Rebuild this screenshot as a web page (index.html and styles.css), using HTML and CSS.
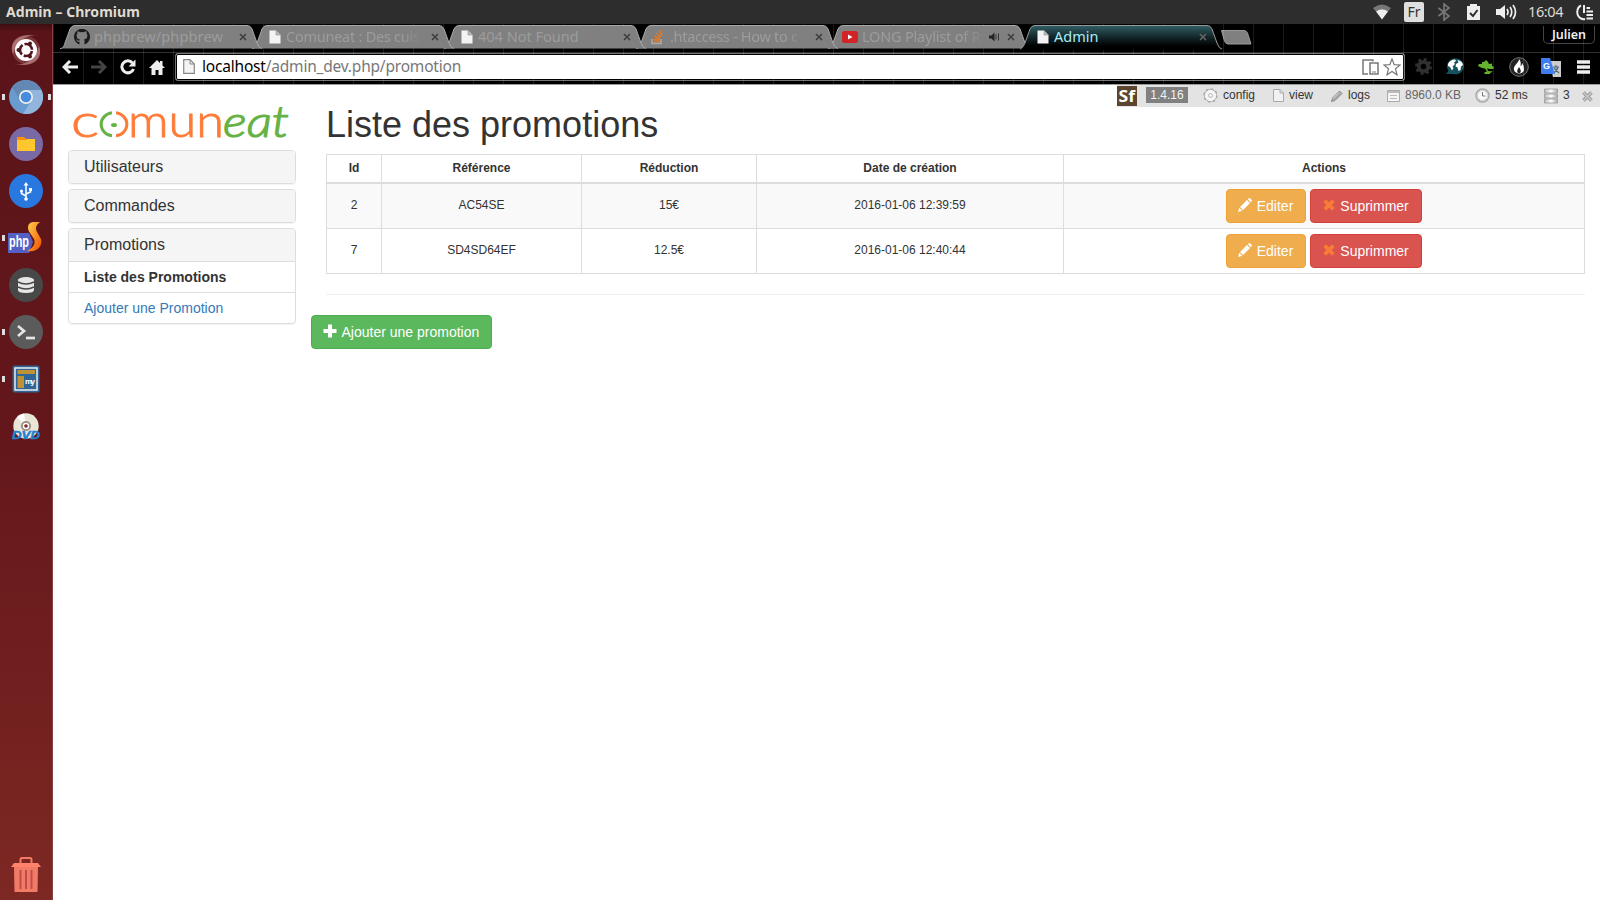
FILE: index.html
```html
<!DOCTYPE html>
<html lang="fr">
<head>
<meta charset="utf-8">
<title>Admin</title>
<link rel="stylesheet" href="styles.css">
</head>
<body>
<svg class="defs" width="0" height="0">
  <defs>
    <linearGradient id="activeTab" x1="0" y1="0" x2="0" y2="1"><stop offset="0" stop-color="#2f5f66"/><stop offset=".45" stop-color="#16292c"/><stop offset=".85" stop-color="#000"/></linearGradient>
    <linearGradient id="gDb" x1="0" y1="0" x2="1" y2="0"><stop offset="0" stop-color="#bbb"/><stop offset=".5" stop-color="#fff"/><stop offset="1" stop-color="#aaa"/></linearGradient>
    <linearGradient id="gFlame" x1="0" y1="0" x2="1" y2="1"><stop offset="0" stop-color="#ffd34d"/><stop offset="1" stop-color="#f04e00"/></linearGradient>
    <symbol id="tab" viewBox="0 0 203 26"><path d="M0 24.500C3 24.500 3.500 23 5 19L10 5Q11.500 1.500 15 1.500H187Q190.500 1.500 192 5L197 19Q199 24.500 202 24.500Z" fill="#808080"/><path d="M0 24.500C3 24.500 3.500 23 5 19L10 5Q11.500 1.500 15 1.500H187Q190.500 1.500 192 5L197 19Q199 24.500 202 24.500" fill="none" stroke="#a8a8a8"/></symbol>
    <symbol id="page" viewBox="0 0 12 14"><path d="M.5.5H7L11.500 5V13.500H.5Z" fill="#f3f3f3"/><path d="M7 .5V5H11.500" fill="#bbb" stroke="#999" stroke-width=".7"/></symbol>
    <symbol id="close" viewBox="0 0 8 8"><path d="M1 1L7 7M7 1L1 7" stroke="currentColor" stroke-width="1.500"/></symbol>
    <symbol id="youtube" viewBox="0 0 16 12"><rect width="16" height="12" rx="2.500" fill="#d22326"/><path d="M6 3.500L10.500 6L6 8.500Z" fill="#fff"/></symbol>
    <symbol id="pencil" viewBox="0 0 14 14"><path d="M0 14L1.300 9.800L4.200 12.700ZM2 9L9 2L12 5L5 12ZM9.800 1.300L11 .2Q11.500-.2 12 .2L13.800 2Q14.200 2.500 13.800 3L12.700 4.200Z" fill="#fff"/></symbol>
    <symbol id="remove" viewBox="0 0 12 12"><path d="M.3 3L3 .3L6 3.300L9 .3L11.700 3L8.700 6L11.700 9L9 11.700L6 8.700L3 11.700L.3 9L3.300 6Z" fill="#f87b36"/></symbol>
  </defs>
</svg>
<div class="desktop">
  <header class="panelbar">
    <b class="window-title">Admin – Chromium</b>
    <div class="tray">
      <svg width="20" height="16" viewBox="0 0 20 16"><path d="M1 4Q10-3 19 4L16 7.500Q10 3 4 7.500Z" fill="#777"/><path d="M4 7.500Q10 3 16 7.500L10 15.500Z" fill="#eee"/></svg>
      <span class="kbd">Fr</span>
      <svg width="14" height="18" viewBox="0 0 14 18"><path d="M1.500 5L12 13L7 17V1L12 5L1.500 13" fill="none" stroke="#777" stroke-width="1.700"/></svg>
      <svg width="13" height="16" viewBox="0 0 13 16"><path d="M0 2H3V0H10V2H13V16H0Z" fill="#eee"/><path d="M3 9L6 12L10.500 6" fill="none" stroke="#2d2d2d" stroke-width="2"/></svg>
      <svg width="21" height="16" viewBox="0 0 21 16"><path d="M0 5H4L9 1V15L4 11H0Z" fill="#eee"/><path d="M11 5Q13 8 11 11M14 3Q17.500 8 14 13M17 1Q22 8 17 15" fill="none" stroke="#eee" stroke-width="1.700"/></svg>
      <span class="clock">16:04</span>
      <svg width="18" height="17" viewBox="0 0 18 17"><path d="M5 1.500C0 4 0 12 5 14.500Q7 15.500 9 15" fill="none" stroke="#eee" stroke-width="2"/><path d="M8 1V9M10.500 4H14M10.500 7.500H17M10.500 11H17M10.500 14.500H17" stroke="#eee" stroke-width="2"/></svg>
    </div>
  </header>
  <div class="workspace">
    <nav class="launcher">
      <div class="app"><svg width="36" height="36" viewBox="0 0 36 36"><circle cx="18" cy="18" r="14" fill="#954e52" opacity=".55"/><path d="M5 22C0 8 12 0 31 4C20 2 10 7 5 22ZM31 14C36 28 24 36 5 32C16 34 27 29 31 14Z" fill="#c99" opacity=".6"/><circle cx="18" cy="18" r="11" fill="#fff"/><circle cx="18" cy="18" r="6" fill="none" stroke="#4f171b" stroke-width="2.600" stroke-dasharray="10.500 2" stroke-dashoffset="-1"/><circle cx="10.500" cy="18" r="2" fill="#4f171b"/><circle cx="22" cy="11.500" r="2" fill="#4f171b"/><circle cx="22" cy="24.500" r="2" fill="#4f171b"/></svg></div>
      <div class="app running focused"><svg width="34" height="34" viewBox="0 0 34 34"><circle cx="17" cy="17" r="17" fill="#699bcf"/><path d="M3 7A17 17 0 0 1 32 10H17L11 20Z" fill="#6488b4"/><path d="M17 10H32.500A17 17 0 0 1 14 33.700L23 20Z" fill="#91b5dc"/><circle cx="17" cy="17" r="7" fill="#eee"/><circle cx="17" cy="17" r="5.300" fill="#468bdd"/></svg></div>
      <div class="app"><svg width="34" height="34" viewBox="0 0 34 34"><circle cx="17" cy="17" r="17" fill="#796aa5"/><path d="M8 10H15L17 12H26V23H8Z" fill="#ff9100"/><path d="M8 13H17L18 12H26V24H8Z" fill="#ffc72d"/></svg></div>
      <div class="app"><svg width="34" height="34" viewBox="0 0 34 34"><circle cx="17" cy="17" r="17" fill="#2878df"/><path d="M17 10V24M17 22L12.500 19.500V17M17 20L21.500 18V15" fill="none" stroke="#fff" stroke-width="1.500"/><path d="M17 8L19.500 11.500H14.500Z" fill="#fff"/><circle cx="17" cy="25" r="1.800" fill="#fff"/><circle cx="12.500" cy="17" r="1.500" fill="#fff"/><rect x="20" y="14" width="3" height="3" fill="#fff"/></svg></div>
      <div class="app running"><svg width="36" height="36" viewBox="0 0 36 36"><path d="M0 13H21L25 22L21 33H0Z" fill="#5560c5"/><path d="M32 2H25C19 3 19 9 22 13L26 19C28 24 25 28 19 31C29 33 35 26 33 19L29 12C27 8 28 5 32 2Z" fill="url(#gFlame)"/><text x="1" y="27" class="php-label" textLength="20" lengthAdjust="spacingAndGlyphs">php</text></svg></div>
      <div class="app"><svg width="34" height="34" viewBox="0 0 34 34"><circle cx="17" cy="17" r="17" fill="#484848"/><path d="M9 11.500V22Q9 25 17 25T25 22V11.500Z" fill="#e6e6e6"/><ellipse cx="17" cy="12" rx="8" ry="3" fill="#e6e6e6"/><path d="M9 14Q17 18 25 14M9 19Q17 23 25 19" fill="none" stroke="#484848" stroke-width="1.500"/></svg></div>
      <div class="app running"><svg width="34" height="34" viewBox="0 0 34 34"><circle cx="17" cy="17" r="17" fill="#5b5b5b"/><path d="M9 11L15 16L9 21" fill="none" stroke="#e5e5e5" stroke-width="2.700"/><path d="M17 23H26" stroke="#e5e5e5" stroke-width="2.700"/></svg></div>
      <div class="app running"><svg width="28" height="28" viewBox="0 0 28 28"><rect x=".5" y=".5" width="27" height="27" rx="2" fill="#2f6496"/><rect x="3" y="3" width="22" height="22" fill="#326597" stroke="#eee" stroke-width="1.500"/><path d="M5.500 5H23V9H5.500ZM5.500 11H12V23H5.500Z" fill="#bf9234"/><text x="13" y="19" class="my-label" textLength="10">my</text></svg></div>
      <div class="app"><svg width="28" height="28" viewBox="0 0 28 28"><circle cx="14" cy="14" r="12.700" fill="#e9e5d7"/><path d="M14 14L5 5A13 13 0 0 1 12 1.400Z" fill="#fff"/><circle cx="14" cy="14" r="5" fill="#998c80"/><circle cx="14" cy="14" r="3.200" fill="#fff"/><circle cx="14" cy="14" r="1.800" fill="#7b2929"/><text x="0" y="27" class="dvd-label" textLength="28" lengthAdjust="spacingAndGlyphs">DVD</text></svg></div>
      <div class="app trash"><svg width="30" height="36" viewBox="0 0 30 36"><path d="M3 10H27L26.500 35H3.500Z" fill="#f27b67"/><path d="M0 10L3 6H27L30 10Z" fill="#ff826b"/><path d="M9.500 6V2.500Q9.500 1 11 1H19Q20.500 1 20.500 2.500V6" fill="none" stroke="#f27b67" stroke-width="2"/><path d="M9.500 13V32M15 13V32M20.500 13V32" stroke="#bd4f49" stroke-width="2"/></svg></div>
    </nav>
    <section class="browser">
      <div class="chrome">
        <div class="tabs">
          <div class="tab"><svg class="shape"><use href="#tab"/></svg>
            <svg class="fav" width="16" height="16" viewBox="0 0 16 16"><path d="M5.500 15.400V12.700C3.500 13 3 12 2.500 11.200C2.200 10.700 1.700 10.600 2.300 10.500C3.500 10.400 3.500 12 5.500 11.600Q5.600 10.900 6 10.500C3.500 10.200 2.600 8.700 2.600 6.800Q2.600 5.400 3.500 4.500Q3.100 3.400 3.600 2.300Q4.800 2.300 6 3.200Q8 2.700 10 3.200Q11.200 2.300 12.400 2.300Q12.900 3.400 12.500 4.500Q13.400 5.400 13.400 6.800C13.400 8.700 12.500 10.200 10 10.500Q10.500 11 10.500 12V15.400A8 8 0 1 0 5.500 15.400Z" fill="#1b1b1b"/></svg>
            <span class="tab-title t1">phpbrew/phpbrew</span><svg class="x"><use href="#close"/></svg></div>
          <div class="tab"><svg class="shape"><use href="#tab"/></svg><svg class="fav doc"><use href="#page"/></svg><span class="tab-title fade t2">Comuneat : Des cuis</span><svg class="x"><use href="#close"/></svg></div>
          <div class="tab"><svg class="shape"><use href="#tab"/></svg><svg class="fav doc"><use href="#page"/></svg><span class="tab-title">404 Not Found</span><svg class="x"><use href="#close"/></svg></div>
          <div class="tab"><svg class="shape"><use href="#tab"/></svg>
            <svg class="fav" width="16" height="16" viewBox="0 0 16 16"><path d="M2 10V14.500H11V10" fill="none" stroke="#aaa" stroke-width="1.500"/><path d="M4 12.500H9.500M4 10L9.500 11M4.500 7L10 9.500M6.500 4L10.700 8M10 1.500L12 7" stroke="#e87922" stroke-width="1.500"/></svg>
            <span class="tab-title fade t4">.htaccess - How to c</span><svg class="x"><use href="#close"/></svg></div>
          <div class="tab"><svg class="shape"><use href="#tab"/></svg><svg class="fav" width="16" height="12"><use href="#youtube"/></svg><span class="tab-title fade t5">LONG Playlist of R</span>
            <svg class="sound" width="11" height="10" viewBox="0 0 11 10"><path d="M0 3.500H2.500L5.500 .5V9.500L2.500 6.500H0Z" fill="#222"/><path d="M7 2.500V7.500M9.500 1.500V8.500" stroke="#333"/></svg><svg class="x"><use href="#close"/></svg></div>
          <div class="tab active"><svg class="shape" viewBox="0 0 203 26"><path d="M-2 26C2 25 3 23 5 19L10 5Q11.500 1.500 15 1.500H187Q190.500 1.500 192 5L197 19Q199 24.500 202 25V26Z" fill="url(#activeTab)"/><path d="M-2 25.500C2 25 3 23 5 19L10 5Q11.500 1.500 15 1.500H187Q190.500 1.500 192 5L197 19Q199 25 202 25" fill="none" stroke="#999"/></svg><svg class="fav doc"><use href="#page"/></svg><span class="tab-title">Admin</span><svg class="x"><use href="#close"/></svg></div>
          <svg class="newtab" width="31" height="15" viewBox="0 0 31 15"><path d="M.5.500H23Q25.500.5 26.500 3L30 14H7Q4.500 14 3.500 11Z" fill="#808080" stroke="#999"/></svg>
          <span class="user">Julien</span>
        </div>
        <div class="toolbar">
          <div class="nav">
            <svg width="16" height="14" viewBox="0 0 16 14"><path d="M8 1L2 7L8 13M2 7H16" fill="none" stroke="#eee" stroke-width="3"/></svg>
            <svg width="16" height="14" viewBox="0 0 16 14"><path d="M8 1L14 7L8 13M14 7H0" fill="none" stroke="#444" stroke-width="3"/></svg>
            <svg width="16" height="16" viewBox="0 0 16 16"><path d="M12.500 4A6 6 0 1 0 13.500 10" fill="none" stroke="#eee" stroke-width="3"/><path d="M15.500 .5V7.500H8.500Z" fill="#eee"/></svg>
            <svg width="16" height="16" viewBox="0 0 16 16"><path d="M8 1L0 9H2.500V16H6.500V11H9.500V16H13.500V9H16L13.500 6.500V2H11V4Z" fill="#eee"/></svg>
          </div>
          <div class="omnibox">
            <svg width="12" height="15" viewBox="0 0 12 15"><path d="M.7.7H7L11.300 5V14.300H.7Z" fill="#f4f4f4" stroke="#888" stroke-width="1.200"/><path d="M7 .7V5H11.300" fill="none" stroke="#888"/></svg>
            <span class="url"><span class="host">localhost</span>/admin_dev.php/promotion</span>
            <svg class="device" width="17" height="16" viewBox="0 0 17 16"><path d="M6 15H1V1H11V2.500" fill="none" stroke="#777" stroke-width="1.500"/><rect x="8" y="4" width="8" height="11" fill="#fff" stroke="#777" stroke-width="1.500"/><path d="M10 13H14" stroke="#777"/></svg>
            <svg width="18" height="18" viewBox="0 0 18 18"><path d="M9 1L11.200 6.700L17.200 7L12.500 10.800L14 16.800L9 13.400L4 16.800L5.500 10.800L.8 7L6.800 6.700Z" fill="none" stroke="#777" stroke-width="1.200"/></svg>
          </div>
          <div class="extensions">
            <svg width="17" height="17" viewBox="-9 -9 18 18"><circle r="5" fill="none" stroke="#303030" stroke-width="4"/><circle r="7.500" fill="none" stroke="#303030" stroke-width="3" stroke-dasharray="3 2.890"/></svg>
            <svg width="18" height="18" viewBox="0 0 18 18"><path d="M0 16L2.500 13A8.500 8 0 1 1 7 16Z" fill="#15525f"/><path d="M2 6Q4 1.500 9 1.500L10 3L8 4.500L9 6L6.500 8.500L7.500 10L6 12.500L4 9L2 8ZM11.500 2Q16.500 3 17 7L15 8.500L14.500 12L12.500 13L11.500 9.500L9.500 8.500L10 6L12.500 4.500Z" fill="#fff"/></svg>
            <svg width="18" height="16" viewBox="0 0 18 16"><path d="M0 7L1 5L4 5L4 3L6 3L8 1L10 3L11 5L14 4.500L14 7L16 8L15 10L12 10L9 9.500L10 12L15 12.500L12 14L12 15H7L6 13.500L9 12.500L7 9.500L4 9L2 8Z" fill="#65b32e"/></svg>
            <svg width="20" height="20" viewBox="0 0 20 20"><circle cx="10" cy="10" r="9.300" fill="#222" stroke="#777"/><path d="M10 2C10 6 4 8 5 13C6 17 14 18 15 13Q15.500 9 13 6Q13 9 11.500 9Q12.500 5 10 2Z" fill="#fff"/><path d="M10 10Q7 14 9 16H11Q13 14 10 10Z" fill="#222"/></svg>
            <svg width="20" height="20" viewBox="0 0 20 20"><path d="M8 4H20V20H12Z" fill="#ccc"/><path d="M12 10H18M15 8V10M12 16Q16 14 17 10M13 11L18 16" fill="none" stroke="#567" stroke-width="1.200"/><path d="M0 1H9L14 17H1Q0 17 0 16Z" fill="#3e7df0"/><text x="2" y="11.500" class="g-label">G</text></svg>
            <svg width="13" height="14" viewBox="0 0 13 14"><path d="M0 2H13M0 7H13M0 12H13" stroke="#eee" stroke-width="3.400"/></svg>
          </div>
        </div>
      </div>
      <main class="page">
        <div class="debugbar">
          <svg class="sf" width="20" height="20" viewBox="0 0 20 20"><rect width="20" height="20" fill="#5b452e"/><text x="1.500" y="15.500" class="sf-label" textLength="16.500" lengthAdjust="spacingAndGlyphs">Sf</text></svg>
          <span class="version">1.4.16</span>
          <span class="dbg config"><svg width="15" height="15" viewBox="-8 -8 16 16"><circle r="6.300" fill="#fff" stroke="#aaa" stroke-width="1"/><circle r="7" fill="none" stroke="#aaa" stroke-width="1.500" stroke-dasharray="3 2.500"/><circle r="5.800" fill="#f5f5f5"/><circle r="2" fill="#fff" stroke="#aaa"/></svg>config</span>
          <span class="dbg view"><svg width="11" height="13" viewBox="0 0 11 13"><path d="M.5.5H7L10.500 4V12.500H.5Z" fill="#f1f1f1" stroke="#aaa"/><path d="M7 .5V4H10.500" fill="none" stroke="#aaa"/></svg>view</span>
          <span class="dbg logs"><svg width="12" height="12" viewBox="0 0 12 12"><path d="M.5 11.500L1.500 8L8.500 1L11 3.500L4 10.500Z" fill="#aaa" stroke="#8c8c8c"/><path d="M2 8.500L8 2.500" stroke="#ddd"/></svg>logs</span>
          <span class="dbg memory"><svg width="13" height="12" viewBox="0 0 13 12"><path d="M.5.5H12.500V11.500H.5Z" fill="#f5f5f5" stroke="#aaa"/><path d="M1 2H12" stroke="#bbb" stroke-width="2"/><path d="M3 5.500H10M3 8.500H10" stroke="#bbb"/></svg>8960.0 KB</span>
          <span class="dbg time"><svg width="15" height="15" viewBox="0 0 15 15"><circle cx="7.500" cy="7.500" r="6.500" fill="#f8f8f8" stroke="#aaa" stroke-width="1.500"/><circle cx="7.500" cy="7.500" r="5" fill="none" stroke="#ccc"/><path d="M7.500 4V8H10.500" fill="none" stroke="#777"/></svg>52 ms</span>
          <span class="dbg db"><svg width="14" height="16" viewBox="0 0 14 16"><path d="M.5 1H13.500V5H.5ZM.5 6H13.500V10H.5ZM.5 11H13.500V15H.5Z" fill="url(#gDb)" stroke="#999" stroke-width=".8"/></svg>3</span>
          <svg class="dismiss" width="11" height="11" viewBox="0 0 11 11"><path d="M1.500 1.500L9.500 9.500M9.500 1.500L1.500 9.500" stroke="#999" stroke-width="3.400"/><path d="M1.500 1.500L9.500 9.500M9.500 1.500L1.500 9.500" stroke="#ccc" stroke-width="1.400"/></svg>
        </div>
        <aside class="sidebar">
          <svg class="logo" width="220" height="40" viewBox="0 0 220 40">
            <text x="0" y="31.500" class="logo-orange" textLength="28" lengthAdjust="spacingAndGlyphs">c</text>
            <path d="M41 7.800A12.500 11.600 0 0 0 41 30.800" fill="none" stroke="#66b245" stroke-width="3"/><path d="M45 7.800A12.500 11.600 0 0 1 45 30.800" fill="none" stroke="#ff7b38" stroke-width="3"/><ellipse cx="43" cy="20" rx="3" ry="2" fill="#66b245"/>
            <text x="57" y="31.500" class="logo-orange" textLength="96" lengthAdjust="spacingAndGlyphs">mun</text>
            <text x="152" y="31.500" class="logo-green" textLength="66" lengthAdjust="spacingAndGlyphs">eat</text>
          </svg>
          <div class="menu"><h4>Utilisateurs</h4></div>
          <div class="menu"><h4>Commandes</h4></div>
          <div class="menu"><h4>Promotions</h4><a class="current">Liste des Promotions</a><a>Ajouter une Promotion</a></div>
        </aside>
        <section class="content">
          <h1>Liste des promotions</h1>
          <table>
            <colgroup><col class="c-id"><col class="c-ref"><col class="c-red"><col class="c-date"><col></colgroup>
            <thead><tr><th>Id</th><th>Référence</th><th>Réduction</th><th>Date de création</th><th>Actions</th></tr></thead>
            <tbody>
              <tr><td>2</td><td>AC54SE</td><td>15€</td><td>2016-01-06 12:39:59</td><td class="action-cell"><div class="actions"><a class="btn edit"><svg width="14" height="14"><use href="#pencil"/></svg>Editer</a><a class="btn delete"><svg width="12" height="12"><use href="#remove"/></svg>Suprimmer</a></div></td></tr>
              <tr><td>7</td><td>SD4SD64EF</td><td>12.5€</td><td>2016-01-06 12:40:44</td><td><div class="actions"><a class="btn edit"><svg width="14" height="14"><use href="#pencil"/></svg>Editer</a><a class="btn delete"><svg width="12" height="12"><use href="#remove"/></svg>Suprimmer</a></div></td></tr>
            </tbody>
          </table>
          <hr>
          <a class="btn add"><svg width="14" height="14" viewBox="0 0 14 14"><path d="M7 .5V13.500M.5 7H13.500" stroke="#fff" stroke-width="4"/></svg>Ajouter une promotion</a>
        </section>
      </main>
    </section>
  </div>
</div>
</body>
</html>
```

FILE: styles.css
```css
* { box-sizing: border-box; }
body { margin: 0; background: #fff; color: #333; font-family: "Liberation Sans", Arial, sans-serif; }
svg { display: block; flex: none; }
.defs { position: absolute; }
.desktop { width: 1600px; height: 900px; overflow: hidden; display: flex; flex-direction: column; }

/* Desktop panel */
.panelbar { height: 24px; flex: none; background: #2d2d2d; color: #dfdbd2; display: flex; align-items: center; justify-content: space-between; padding: 0 6px 0 6px; font-family: "Noto Sans", sans-serif; font-size: 14.500px; }
.window-title { font-size: 14px; letter-spacing: .05px; margin-top: -2px; }
.tray { display: flex; align-items: center; }
.kbd { width: 20px; height: 20px; margin: 0 13px 0 12px; border-radius: 2px; background: #dfdfdf; color: #333; font-size: 14px; line-height: 20px; text-align: center; }
.tray svg:nth-of-type(2) { margin-right: 16px; }
.tray svg:nth-of-type(3) { margin-right: 16px; }
.clock { width: 36px; margin: -2px 12px 0 11px; white-space: nowrap; font-size: 14.500px; letter-spacing: -.4px; }

/* Launcher */
.workspace { flex: 1; display: flex; min-height: 0; }
.launcher { width: 53px; flex: none; padding-top: 2px; display: flex; flex-direction: column; background: linear-gradient(#3d0d10, #5a1419 8px, #64171b 48%, #7d2823); border-right: 1px solid #873f40; }
.app { height: 47px; display: grid; place-items: center; position: relative; }
.running::before, .focused::after { content: ""; position: absolute; left: 2px; top: 21px; width: 3px; height: 6px; background: #ddd; }
.focused::after { left: auto; right: 1px; }
.trash { margin-top: auto; margin-bottom: 2px; }
.php-label { font: bold 17px "Liberation Sans", sans-serif; fill: #fff; }
.my-label { font: bold 8px "Liberation Sans", sans-serif; fill: #fff; }
.dvd-label { font: italic bold 11px "Liberation Sans", sans-serif; fill: #1c83d2; stroke: #1c83d2; stroke-width: .5px; }

/* Browser frame */
.browser { flex: 1; display: flex; flex-direction: column; min-width: 0; }
.chrome { height: 61px; flex: none; background: #000; border-bottom: 1px solid #9c9c9c; position: relative; font-family: "Noto Sans", sans-serif; }
.chrome::after { content: ""; position: absolute; inset: 0; pointer-events: none; background: repeating-linear-gradient(90deg, rgba(255,255,255,.11) 0 1px, transparent 1px 30px); }
.tabs { height: 26px; display: flex; padding-left: 8px; }
.tab { width: 200px; margin-right: -8px; flex: none; height: 26px; display: flex; align-items: center; padding: 0 14px 1px 13px; position: relative; color: #9c9c9c; font-size: 14.500px; }
.tab:nth-child(1) { z-index: 6; } .tab:nth-child(2) { z-index: 5; } .tab:nth-child(3) { z-index: 4; } .tab:nth-child(4) { z-index: 3; } .tab:nth-child(5) { z-index: 2; }
.tab.active { z-index: 7; color: #a5edf8; }
.shape { position: absolute; left: -1px; top: 0; width: 203px; height: 26px; z-index: -1; }
.fav { margin-right: 4px; }
.fav.doc { width: 12px; height: 14px; margin: 0 5px 0 3px; }
.tab-title { flex: 1; min-width: 0; margin-right: 10px; white-space: nowrap; margin-top: -1px; }
.fade { -webkit-mask-image: linear-gradient(90deg, #000 calc(100% - 20px), rgba(0,0,0,.15)); mask-image: linear-gradient(90deg, #000 calc(100% - 20px), rgba(0,0,0,.15)); }
.t1 { letter-spacing: .15px; }
.t2 { letter-spacing: -.25px; }
.t4 { letter-spacing: -.3px; }
.t5 { letter-spacing: -.2px; }
.x { width: 8px; height: 8px; color: #3c3c3c; margin-top: 1px; }
.active .x { color: #666; }
.sound { margin: 0 7px 0 -4px; }
.newtab { margin: 6px 0 0 8px; }
.user { margin: 2px 5px 0 auto; width: 52px; height: 18px; border: 1px solid #444; border-top: 0; border-radius: 0 0 5px 5px; color: #eee; font-size: 12.500px; font-weight: 600; line-height: 18px; text-align: center; }
.toolbar { height: 34px; display: flex; background: linear-gradient(transparent 2px, #303030 2px 3px, transparent 3px); padding-top: 3px; }
.nav { width: 116px; height: 27px; margin: 0 4px 0 2px; display: grid; grid-template-columns: repeat(4, 29px); place-items: center; }
.omnibox { width: 1230px; height: 28px; display: flex; align-items: center; padding: 0 3px 1px 7px; background: #fff; border: 1px solid #777; outline: 1px solid #000; outline-offset: -2px; border-radius: 3px; position: relative; }
.url { flex: 1; margin: -2px 0 0 7px; font-size: 15.500px; line-height: 24px; letter-spacing: -.2px; color: #777; }
.host { color: #000; }
.device { margin-right: 4px; }
.extensions { height: 27px; margin-left: 2px; display: grid; grid-template-columns: repeat(6, 32px); place-items: center; }
.g-label { font: bold 9px "Liberation Sans", sans-serif; fill: #fff; }

/* Symfony debug bar */
.page { flex: 1; display: flex; position: relative; padding-left: 15px; }
.debugbar { position: absolute; right: 0; top: 0; width: 483px; height: 22px; display: flex; align-items: center; background: #e3e3e3; font-size: 12px; line-height: 16px; padding-bottom: 2px; white-space: nowrap; }
.sf { margin-top: 2px; }
.sf-label { font: bold 16px "Open Sans", sans-serif; fill: #fff; }
.version { width: 42px; height: 16px; margin: 0 15px 0 9px; background: #808080; color: #f4f4f4; text-align: center; }
.dbg { display: flex; align-items: center; gap: 5px; flex: none; }
.dbg svg { margin-top: 1px; }
.config { width: 70px; } .view { width: 58px; } .logs { width: 56px; } .memory { width: 88px; color: #666; } .time { width: 69px; } .db { width: 38px; }
.dismiss { margin-top: 2px; }

/* Admin page */
.sidebar { width: 228px; flex: none; }
.logo { margin: 20px 0 5px 3px; overflow: visible; }
.logo-orange { font: 300 46px Lato, sans-serif; fill: #ff7b38; stroke: #ff7b38; stroke-width: .9px; }
.logo-green { font: italic 300 44px Lato, sans-serif; fill: #66b245; stroke: #66b245; stroke-width: 1.200px; }
.menu { margin-bottom: 5px; border: 1px solid #ddd; border-radius: 4px; box-shadow: 0 1px 1px rgba(0,0,0,.05); overflow: hidden; }
.menu h4 { margin: 0; height: 32px; padding: 0 15px; background: #f5f5f5; font-size: 16px; font-weight: 500; line-height: 32px; }
.menu a { display: block; height: 31px; padding: 0 15px; border-top: 1px solid #ddd; color: #337ab7; font-size: 14px; line-height: 30px; }
.menu a.current { color: #333; font-weight: bold; }
.content { flex: 1; padding: 0 15px 0 30px; }
h1 { margin: 20px 0 9px; font-size: 36px; font-weight: 500; line-height: 40px; }
table { width: 1259px; table-layout: fixed; border-collapse: collapse; font-size: 12px; line-height: 17px; text-align: center; border: 1px solid #ddd; }
th, td { border: 1px solid #ddd; padding: 0; }
th { height: 28px; border-bottom-width: 2px; }
td { height: 45px; padding-bottom: 1px; }
tbody tr:first-child td { height: 46px; }
tbody tr:first-child td.action-cell { padding: 1px 0 0; }
tbody tr:nth-child(odd) { background: #f9f9f9; }
.c-id { width: 55px; } .c-ref { width: 200px; } .c-red { width: 175px; } .c-date { width: 307px; }
.actions { display: flex; justify-content: center; gap: 4px; }
.btn { display: inline-flex; align-items: center; height: 34px; padding: 0 12px 0 11px; gap: 4.500px; border: 1px solid; border-radius: 4px; color: #fff; font-size: 14px; line-height: 20px; }
.btn svg { margin-top: -2px; }
.edit { background: #f0ad4e; border-color: #eea236; }
.delete { background: #d9534f; border-color: #d43f3a; }
.delete svg { margin-right: .5px; margin-left: 1px; }
.add { background: #5cb85c; border-color: #4cae4c; margin-left: -15px; }
hr { margin: 20px 0; height: 1px; border: 0; background: #eee; }
```
